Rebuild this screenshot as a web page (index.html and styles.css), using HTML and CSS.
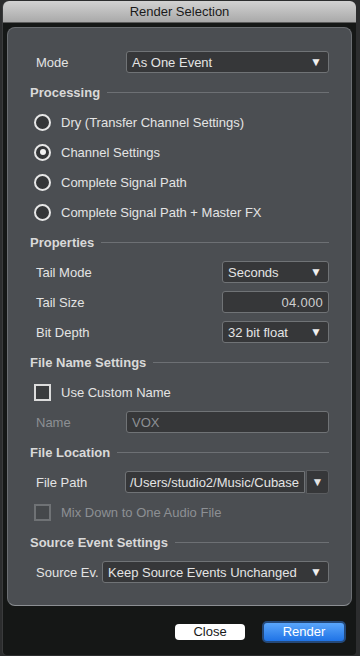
FILE: index.html
```html
<!DOCTYPE html>
<html lang="en">

<head>
    <meta charset="UTF-8">
    <meta name="viewport" content="width=device-width, initial-scale=1.0">
    <title>Render Selection</title>
    <link rel="stylesheet" href="styles.css">
</head>

<body>
    <div class="window">
        <div class="titlebar">Render Selection</div>
        <div class="window-body">
            <div class="panel">
                <div class="row">
                    <span class="label wide">Mode</span>
                    <div class="select grow"><span>As One Event</span><span class="arrow">&#9660;</span></div>
                </div>

                <div class="heading"><span>Processing</span></div>
                <div class="row option"><span class="radio"></span>Dry (Transfer Channel Settings)</div>
                <div class="row option"><span class="radio checked"></span>Channel Settings</div>
                <div class="row option"><span class="radio"></span>Complete Signal Path</div>
                <div class="row option"><span class="radio"></span>Complete Signal Path + Master FX</div>

                <div class="heading"><span>Properties</span></div>
                <div class="row">
                    <span class="label">Tail Mode</span>
                    <div class="select small"><span>Seconds</span><span class="arrow">&#9660;</span></div>
                </div>
                <div class="row">
                    <span class="label">Tail Size</span>
                    <div class="field small number">04.000</div>
                </div>
                <div class="row">
                    <span class="label">Bit Depth</span>
                    <div class="select small"><span>32 bit float</span><span class="arrow">&#9660;</span></div>
                </div>

                <div class="heading"><span>File Name Settings</span></div>
                <div class="row option"><span class="check"></span>Use Custom Name</div>
                <div class="row">
                    <span class="label wide muted">Name</span>
                    <div class="field grow muted">VOX</div>
                </div>

                <div class="heading"><span>File Location</span></div>
                <div class="row">
                    <span class="label path-label">File Path</span>
                    <div class="field grow path">/Users/studio2/Music/Cubase</div>
                    <div class="drop-btn">&#9660;</div>
                </div>
                <div class="row option muted"><span class="check disabled"></span>Mix Down to One Audio File</div>

                <div class="heading"><span>Source Event Settings</span></div>
                <div class="row">
                    <span class="label narrow">Source Ev.</span>
                    <div class="select grow"><span>Keep Source Events Unchanged</span><span class="arrow">&#9660;</span></div>
                </div>
            </div>

            <div class="footer">
                <div class="btn close">Close</div>
                <div class="btn render">Render</div>
            </div>
        </div>
    </div>
</body>

</html>
```

FILE: styles.css
```css
body {
    margin: 0;
    background: #2c2d2e;
    font-family: 'Liberation Sans', Arial, sans-serif;
    font-size: 13px;
    color: #e4e4e4;
}

.window {
    margin: 1px 4px 0 3px;
    height: 654px;
    display: flex;
    flex-direction: column;
    border-radius: 6px 6px 4px 4px;
    overflow: hidden;
    background: #151716;
    box-shadow: -1px 0 0 #3a3b3c;
}

.titlebar {
    height: 21px;
    line-height: 21px;
    text-align: center;
    color: #1a1a1a;
    background: linear-gradient(#d2d2d2, #a9a9a9);
    border-bottom: 1px solid #5c5c5c;
}

.window-body {
    flex: 1;
    padding: 4px 4px 0 4px;
}

.panel {
    background: #4b4e52;
    border: 1px solid #6b6e72;
    border-bottom-color: #8c8f93;
    border-radius: 8px;
    padding: 19px 22px 18px 22px;
    display: flex;
    flex-direction: column;
}

.row {
    height: 30px;
    display: flex;
    align-items: center;
    padding-left: 6px;
}

.label {
    width: 108px;
    flex-shrink: 0;
}

.label.wide {
    width: 90px;
}

.label.path-label {
    width: 89px;
}

.label.narrow {
    width: 66px;
}

.muted {
    color: #8d9094;
}

.heading {
    height: 30px;
    display: flex;
    align-items: center;
    font-weight: bold;
    color: #d9d9d9;
}

.heading::after {
    content: "";
    flex: 1;
    height: 1px;
    margin-left: 7px;
    background: #6d7074;
}

.select,
.field {
    height: 22px;
    box-sizing: border-box;
    background: #363739;
    border: 1px solid #707376;
    border-radius: 3px;
    display: flex;
    align-items: center;
    padding: 0 5px;
}

.select {
    justify-content: space-between;
}

.arrow {
    font-size: 12px;
    color: #f0f0f0;
    margin-right: 1px;
}

.grow {
    flex: 1;
}

.small {
    width: 107px;
    margin-left: auto;
}

.number {
    justify-content: flex-end;
    letter-spacing: 0.3px;
    color: #cfcfcf;
}

.path {
    padding-left: 4px;
    white-space: nowrap;
    overflow: hidden;
    border-radius: 3px 0 0 3px;
}

.drop-btn {
    width: 23px;
    height: 24px;
    margin-left: 1px;
    box-sizing: border-box;
    background: #363739;
    border: 1px solid #5a5c5f;
    border-radius: 0 3px 3px 0;
    font-size: 12px;
    display: flex;
    align-items: center;
    justify-content: center;
}

.option {
    padding-left: 4px;
}

.radio {
    width: 17px;
    height: 17px;
    box-sizing: border-box;
    border: 2px solid #e6e6e6;
    border-radius: 50%;
    background: #343638;
    margin-right: 10px;
    display: flex;
    align-items: center;
    justify-content: center;
}

.radio.checked::after {
    content: "";
    width: 6px;
    height: 6px;
    border-radius: 50%;
    background: #f2f2f2;
}

.check {
    width: 17px;
    height: 17px;
    box-sizing: border-box;
    border: 2px solid #dcdcdc;
    background: #3a3c3e;
    margin-right: 10px;
}

.check.disabled {
    border-color: #6f7275;
    background: #45484b;
}

.footer {
    display: flex;
    justify-content: flex-end;
    align-items: center;
    gap: 17px;
    padding: 15px 6px 0 0;
}

.btn {
    text-align: center;
    border-radius: 4px;
}

.btn.close {
    width: 70px;
    height: 16px;
    line-height: 16px;
    background: #ffffff;
    color: #1a1a1a;
}

.btn.render {
    width: 80px;
    height: 18px;
    line-height: 18px;
    background: linear-gradient(#5aa6fb, #1f73e6);
    color: #ffffff;
    border: 2px solid #24497a;
    border-radius: 5px;
}
```
